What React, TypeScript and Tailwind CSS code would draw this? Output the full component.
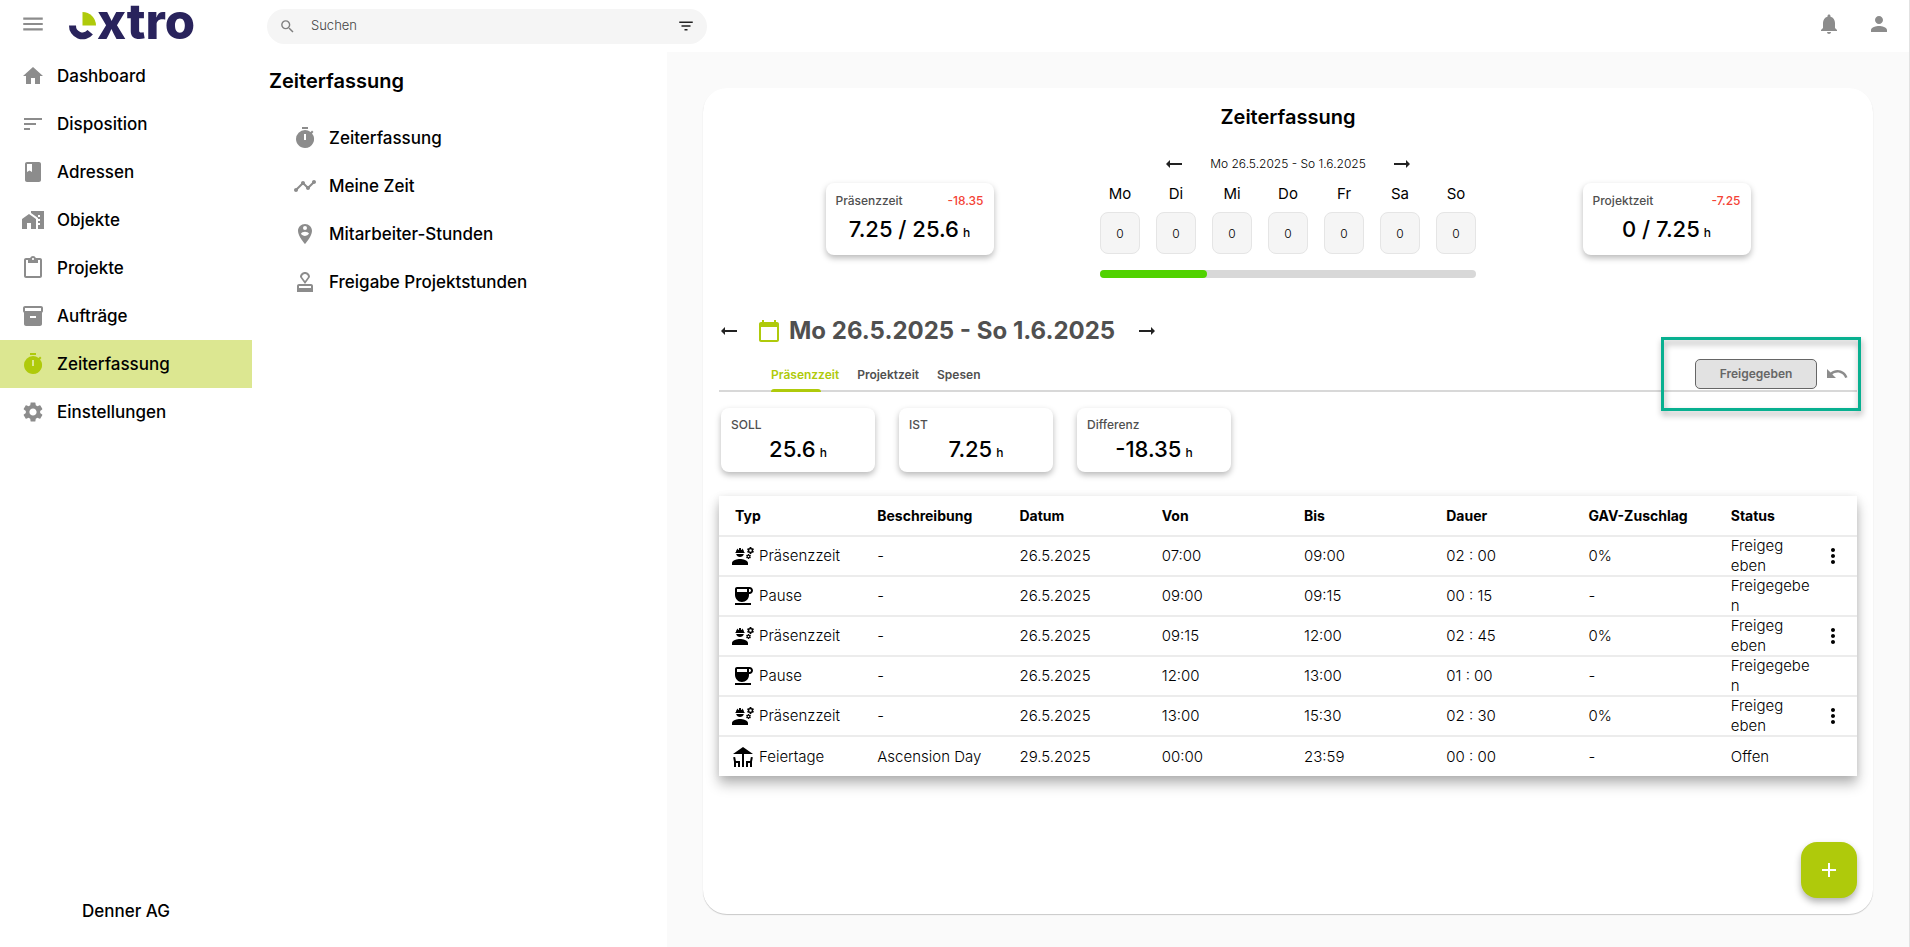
import React from "react";
import {
  MdMenu, MdHome, MdSort, MdClass, MdHomeWork, MdContentPaste, MdInventory2, MdTimer, MdSettings,
  MdSearch, MdFilterList, MdNotifications, MdPerson, MdTimeline, MdPersonPinCircle, MdOutlineApproval,
  MdEngineering, MdCoffee, MdDeck, MdMoreVert, MdAdd, MdUndo, MdCalendarToday, MdArrowRightAlt,
} from "react-icons/md";
import type { IconType } from "react-icons";

const mainNav: { label: string; icon: IconType; active?: boolean }[] = [
  { label: "Dashboard", icon: MdHome },
  { label: "Disposition", icon: MdSort },
  { label: "Adressen", icon: MdClass },
  { label: "Objekte", icon: MdHomeWork },
  { label: "Projekte", icon: MdContentPaste },
  { label: "Aufträge", icon: MdInventory2 },
  { label: "Zeiterfassung", icon: MdTimer, active: true },
  { label: "Einstellungen", icon: MdSettings },
];

const subNav: { label: string; icon: IconType }[] = [
  { label: "Zeiterfassung", icon: MdTimer },
  { label: "Meine Zeit", icon: MdTimeline },
  { label: "Mitarbeiter-Stunden", icon: MdPersonPinCircle },
  { label: "Freigabe Projektstunden", icon: MdOutlineApproval },
];

const days = ["Mo", "Di", "Mi", "Do", "Fr", "Sa", "So"];
const columns = ["Typ", "Beschreibung", "Datum", "Von", "Bis", "Dauer", "GAV-Zuschlag", "Status"];
const tabs = ["Präsenzzeit", "Projektzeit", "Spesen"];

const rows = [
  { type: "Präsenzzeit", text: "-", date: "26.5.2025", from: "07:00", to: "09:00", duration: "02 : 00", gav: "0%", status: "Freigegeben", menu: true },
  { type: "Pause", text: "-", date: "26.5.2025", from: "09:00", to: "09:15", duration: "00 : 15", gav: "-", status: "Freigegeben" },
  { type: "Präsenzzeit", text: "-", date: "26.5.2025", from: "09:15", to: "12:00", duration: "02 : 45", gav: "0%", status: "Freigegeben", menu: true },
  { type: "Pause", text: "-", date: "26.5.2025", from: "12:00", to: "13:00", duration: "01 : 00", gav: "-", status: "Freigegeben" },
  { type: "Präsenzzeit", text: "-", date: "26.5.2025", from: "13:00", to: "15:30", duration: "02 : 30", gav: "0%", status: "Freigegeben", menu: true },
  { type: "Feiertage", text: "Ascension Day", date: "29.5.2025", from: "00:00", to: "23:59", duration: "00 : 00", gav: "-", status: "Offen" },
];

const typeIcons: Record<string, IconType> = {
  Präsenzzeit: MdEngineering,
  Pause: MdCoffee,
  Feiertage: MdDeck,
};

function Logo() {
  return (
    <svg viewBox="0 0 128 38" className="h-[38px] w-32 overflow-visible" role="img" aria-label="extro">
      <path d="M13.5 8 A13.5 13.5 0 0 1 27 21.5 H13.5 Z" fill="#afca0b" />
      <path d="M3.5 21.5 A10 10 0 0 0 21.2 28.2" fill="none" stroke="#29235c" strokeWidth="7" />
      <text x="28" y="35" fontSize="49" fontWeight="800" fill="#29235c" className="font-['Inter',sans-serif]">xtro</text>
    </svg>
  );
}

function StatCard({ label, value, delta, wide }: { label: string; value: string; delta?: string; wide?: boolean }) {
  return (
    <div
      className={
        (wide ? "h-[72px] w-[168px] pt-2.5 " : "h-16 w-[154px] pt-[9px] ") +
        "rounded-lg bg-white px-2.5 shadow-[0_3px_6px_rgba(0,0,0,0.28)]"
      }
    >
      <div className="flex justify-between text-xs leading-4 font-medium text-[#505050]">
        <span>{label}</span>
        {delta && <span className="text-[#f44336]">{delta}</span>}
      </div>
      <div className={(wide ? "mt-2 " : "mt-1 ") + "flex items-baseline justify-center gap-1 text-[22px] leading-6 font-medium"}>
        <span>{value}</span>
        <span className="text-xs">h</span>
      </div>
    </div>
  );
}

export default function App() {
  return (
    <div className="flex min-h-screen flex-col border-r border-[#e2e2e2] bg-white font-['Inter',sans-serif] text-black">
      <header className="flex h-[52px] shrink-0 items-center">
        <div className="flex h-full w-[267px] items-start pl-5">
          <button aria-label="Menü" className="mt-[11px] text-[#8c8c8c]"><MdMenu size={26} /></button>
          <a href="#" className="mt-1 ml-[23px]"><Logo /></a>
        </div>
        <div className="flex h-[35px] w-[440px] items-center rounded-full bg-[#f5f5f5] px-3 text-[#808080]">
          <MdSearch size={17} />
          <input aria-label="Suchen" placeholder="Suchen" className="ml-[15px] min-w-0 flex-1 bg-transparent text-[13px] font-light outline-none placeholder:text-[#444]" />
          <button aria-label="Filter" className="text-[#222]"><MdFilterList size={18} /></button>
        </div>
        <div className="mb-1 ml-auto flex gap-[26px] pr-[18px] text-[#8c8c8c]">
          <button aria-label="Benachrichtigungen"><MdNotifications size={24} /></button>
          <button aria-label="Profil"><MdPerson size={24} /></button>
        </div>
      </header>

      <div className="flex flex-1">
        <nav className="flex w-[252px] shrink-0 flex-col text-[17px] leading-6 font-medium">
          {mainNav.map(({ label, icon: Icon, active }) => (
            <a key={label} href="#" className={(active ? "bg-[#dce791] " : "") + "flex h-12 items-center gap-3 pl-[21px]"}>
              <Icon size={24} className={active ? "text-[#afca0b]" : "text-[#8c8c8c]"} />
              {label}
            </a>
          ))}
          <div className="mt-auto pb-6 text-center">Denner AG</div>
        </nav>

        <aside className="w-[415px] shrink-0 pl-[17px]">
          <h2 className="pt-[15px] pb-[19px] text-xl leading-7 font-semibold">Zeiterfassung</h2>
          <nav className="pl-6 text-[17px] leading-6 font-medium">
            {subNav.map(({ label, icon: Icon }) => (
              <a key={label} href="#" className="flex h-12 items-center gap-3">
                <Icon size={24} className="text-[#8c8c8c]" />
                {label}
              </a>
            ))}
          </nav>
        </aside>

        <main className="flex min-w-0 flex-1 bg-[#fafafa] pt-9 pr-9 pb-[33px] pl-9">
          <section className="flex min-w-0 flex-1 flex-col rounded-3xl bg-white px-4 shadow-[0_1px_1px_rgba(0,0,0,0.2)]">
            <h1 className="pt-[15px] text-center text-xl leading-7 font-semibold">Zeiterfassung</h1>

            <div className="mt-3 flex justify-evenly">
              <div className="pt-10"><StatCard wide label="Präsenzzeit" value="7.25 / 25.6" delta="-18.35" /></div>
              <div className="w-[376px]">
                <div className="mt-[9px] flex h-6 items-center justify-center gap-6 text-[#222]">
                  <button aria-label="Vorherige Woche"><MdArrowRightAlt size={24} className="rotate-180" /></button>
                  <span className="text-xs font-light text-black">Mo 26.5.2025 - So 1.6.2025</span>
                  <button aria-label="Nächste Woche"><MdArrowRightAlt size={24} /></button>
                </div>
                <div className="mt-1.5 flex justify-between">
                  {days.map((day) => (
                    <label key={day} className="flex flex-col items-center gap-1.5 text-[15px] leading-6">
                      {day}
                      <input readOnly value="0" className="h-[42px] w-10 rounded-lg border border-[#e5e5e5] bg-[#f5f5f5] text-center text-xs font-light text-black" />
                    </label>
                  ))}
                </div>
                <div className="mt-4 h-2 rounded-full bg-[#d8d8d8]">
                  <div className="h-2 w-[107px] rounded-full bg-[#50d200]" />
                </div>
              </div>
              <div className="pt-10"><StatCard wide label="Projektzeit" value="0 / 7.25" delta="-7.25" /></div>
            </div>

            <div className="mt-9 flex h-[34px] items-center text-[#505050]">
              <button aria-label="Zurück" className="-ml-0.5 text-[#222]"><MdArrowRightAlt size={24} className="rotate-180" /></button>
              <MdCalendarToday size={24} className="ml-4 text-[#afca0b]" />
              <span className="ml-2 text-2xl font-bold">Mo 26.5.2025 - So 1.6.2025</span>
              <button aria-label="Weiter" className="ml-5 text-[#222]"><MdArrowRightAlt size={24} /></button>
            </div>

            <div className="relative mt-2 flex h-9 items-start justify-between border-b-2 border-[#d8d8d8] pl-[52px]">
              <div className="flex h-9 items-end gap-[18px] text-xs font-semibold text-[#505050]" role="tablist">
                {tabs.map((tab, i) => (
                  <button
                    key={tab}
                    role="tab"
                    aria-selected={i === 0}
                    className={(i === 0 ? "text-[#afca0b] " : "") + "flex h-[25px] flex-col justify-between text-left"}
                  >
                    <span>{tab}</span>
                    {i === 0 && <span className="h-[3px] w-[50px] rounded-t-sm bg-[#afca0b]" />}
                  </button>
                ))}
              </div>
              <div className="flex items-center gap-2 pt-[3px] pr-2">
                <button className="h-[30px] w-[122px] rounded-[5px] border border-[#666] bg-[#e2e2e2] text-xs font-semibold text-[#666]">
                  Freigegeben
                </button>
                <button aria-label="Rückgängig" className="text-[#8c8c8c]"><MdUndo size={24} /></button>
              </div>
              <div className="pointer-events-none absolute -top-[19px] -right-1 h-[74px] w-[200px] border-3 border-[#08b090] drop-shadow-[1px_4px_3px_rgba(0,0,0,0.35)]" />
            </div>

            <div className="mt-4 flex gap-6 pl-0.5">
              <StatCard label="SOLL" value="25.6" />
              <StatCard label="IST" value="7.25" />
              <StatCard label="Differenz" value="-18.35" />
            </div>

            <table className="mt-6 w-full table-fixed border-collapse bg-white text-left text-[15px] leading-5 font-light shadow-[0_8px_12px_rgba(0,0,0,0.28),0_1px_8px_rgba(0,0,0,0.08)]">
              <thead>
                <tr className="h-10 border-b-2 border-[#ececec] text-sm font-bold">
                  {columns.map((column) => (
                    <th key={column} className="py-0 pl-4 font-bold">{column}</th>
                  ))}
                </tr>
              </thead>
              <tbody>
                {rows.map((row) => {
                  const Icon = typeIcons[row.type];
                  return (
                    <tr key={row.date + row.from} className="h-10 border-b-2 border-[#ececec] last:border-b-0">
                      <td className="py-0 pl-3">
                        <div className="flex items-center gap-1"><Icon size={24} />{row.type}</div>
                      </td>
                      <td className="py-0 pl-4">{row.text}</td>
                      <td className="py-0 pl-4">{row.date}</td>
                      <td className="py-0 pl-4">{row.from}</td>
                      <td className="py-0 pl-4">{row.to}</td>
                      <td className="py-0 pl-4">{row.duration}</td>
                      <td className="py-0 pl-4">{row.gav}</td>
                      <td className="py-0 pl-4">
                        <div className="-my-px flex items-center justify-between pr-3">
                          <span className={(row.menu ? "w-14 " : "w-20 ") + "break-all"}>{row.status}</span>
                          {row.menu && <button aria-label="Aktionen"><MdMoreVert size={24} /></button>}
                        </div>
                      </td>
                    </tr>
                  );
                })}
              </tbody>
            </table>

            <button
              aria-label="Eintrag hinzufügen"
              className="mt-auto mb-4 flex size-14 items-center justify-center self-end rounded-2xl bg-[#afca0b] text-white shadow-[0_4px_7px_rgba(0,0,0,0.3)]"
            >
              <MdAdd size={24} />
            </button>
          </section>
        </main>
      </div>
    </div>
  );
}
